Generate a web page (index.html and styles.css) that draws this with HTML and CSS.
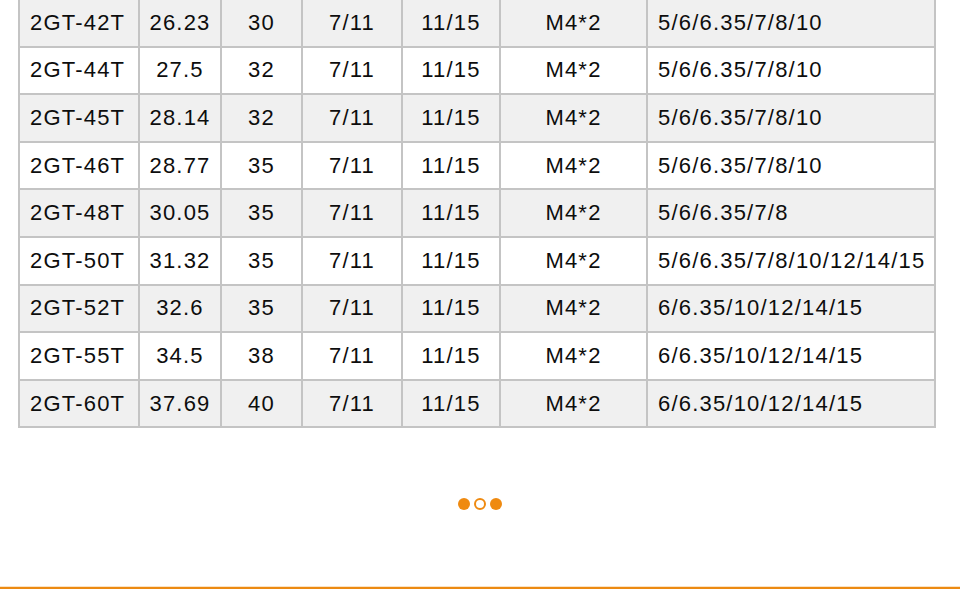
FILE: index.html
```html
<!DOCTYPE html>
<html>
<head>
<meta charset="utf-8">
<link rel="stylesheet" href="styles.css">
</head>
<body>
<div class="page">
  <table class="spec">
    <colgroup>
      <col class="c1"><col class="c2"><col class="c3"><col class="c4"><col class="c5"><col class="c6"><col class="c7">
    </colgroup>
    <tbody>
      <tr><td class="l">2GT-42T</td><td>26.23</td><td>30</td><td>7/11</td><td>11/15</td><td>M4*2</td><td class="l">5/6/6.35/7/8/10</td></tr>
      <tr><td class="l">2GT-44T</td><td>27.5</td><td>32</td><td>7/11</td><td>11/15</td><td>M4*2</td><td class="l">5/6/6.35/7/8/10</td></tr>
      <tr><td class="l">2GT-45T</td><td>28.14</td><td>32</td><td>7/11</td><td>11/15</td><td>M4*2</td><td class="l">5/6/6.35/7/8/10</td></tr>
      <tr><td class="l">2GT-46T</td><td>28.77</td><td>35</td><td>7/11</td><td>11/15</td><td>M4*2</td><td class="l">5/6/6.35/7/8/10</td></tr>
      <tr><td class="l">2GT-48T</td><td>30.05</td><td>35</td><td>7/11</td><td>11/15</td><td>M4*2</td><td class="l">5/6/6.35/7/8</td></tr>
      <tr><td class="l">2GT-50T</td><td>31.32</td><td>35</td><td>7/11</td><td>11/15</td><td>M4*2</td><td class="l">5/6/6.35/7/8/10/12/14/15</td></tr>
      <tr><td class="l">2GT-52T</td><td>32.6</td><td>35</td><td>7/11</td><td>11/15</td><td>M4*2</td><td class="l">6/6.35/10/12/14/15</td></tr>
      <tr><td class="l">2GT-55T</td><td>34.5</td><td>38</td><td>7/11</td><td>11/15</td><td>M4*2</td><td class="l">6/6.35/10/12/14/15</td></tr>
      <tr><td class="l">2GT-60T</td><td>37.69</td><td>40</td><td>7/11</td><td>11/15</td><td>M4*2</td><td class="l">6/6.35/10/12/14/15</td></tr>
    </tbody>
  </table>
  <div class="dots">
    <span class="dot"></span><span class="dot hollow"></span><span class="dot"></span>
  </div>
  <div class="rule"></div>
</div>
</body>
</html>
```
FILE: styles.css
```css
html, body {
  margin: 0;
  padding: 0;
  background: #fff;
}
.page {
  width: 960px;
  height: 589px;
  overflow: hidden;
  display: flex;
  flex-direction: column;
}
.spec {
  margin: -2px 0 0 18px;
  width: 918px;
  border-collapse: collapse;
  table-layout: fixed;
  font-family: "Liberation Sans", Arial, sans-serif;
  font-size: 22px;
  letter-spacing: 1.2px;
  color: #0d0d0d;
}
.c1 { width: 120px; }
.c2 { width: 82px; }
.c3 { width: 81px; }
.c4 { width: 100px; }
.c5 { width: 98px; }
.c6 { width: 147px; }
.c7 { width: 288px; }
.spec tr { height: 47.6px; }
.spec tr:nth-child(odd) { background: #f0f0f0; }
.spec td {
  border: 2px solid #c4c4c4;
  padding: 0;
  text-align: center;
  vertical-align: middle;
  white-space: nowrap;
}
.spec td.l {
  text-align: left;
  padding-left: 10px;
}
.dots {
  margin-top: 70px;
  display: flex;
  justify-content: center;
  gap: 4px;
}
.dot {
  width: 12px;
  height: 12px;
  border-radius: 50%;
  background: #ef8a10;
  box-sizing: border-box;
}
.dot.hollow {
  background: #fff;
  border: 2px solid #ef8a10;
}
.rule {
  margin-top: auto;
  height: 2px;
  background: #ec8a12;
  box-shadow: 0 -1px 0 #fbe3c4;
}
```
